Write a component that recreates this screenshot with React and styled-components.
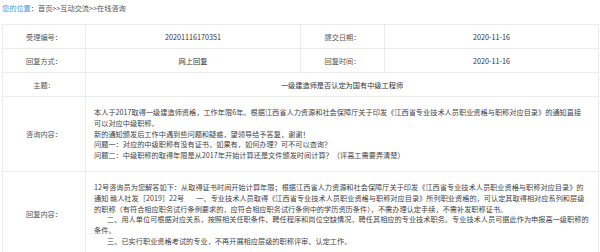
import React from 'react';
import styled, { createGlobalStyle } from 'styled-components';

const GlobalStyle = createGlobalStyle`
  body {
    margin: 0;
    background: #fff;
    font-family: "Noto Sans CJK SC", "Noto Sans", sans-serif;
    color: #333;
  }
`

const Page = styled.div`
  padding: 0 2px;
  width: 596px;
`

const Crumbs = styled.div`
  height: 17px;
  line-height: 17px;
  font-size: 7.2px;
  color: #555;
  margin-bottom: 7px;
`

const CrumbLink = styled.span`
  color: #4a9ad8;
`

const Table = styled.table`
  width: 100%;
  table-layout: fixed;
  border-collapse: collapse;
  font-size: 7.2px;
`

const Cell = styled.td`
  border: 1px solid #ececec;
  height: 23px;
  padding: 0;
  text-align: center;
  vertical-align: middle;
  color: ${p => (p.$label ? '#555' : '#333')};
`

const Content = styled.td`
  border: 1px solid #ececec;
  padding: 10px 6px 10px 8px;
  text-align: left;
  line-height: 10.8px;
  color: #444;
`

const Para = styled.div`
  text-indent: ${p => (p.$indent ? '13px' : '0')};
`

export default function App() {
  return (
    <Page>
      <GlobalStyle />
      <Crumbs>
        <CrumbLink>您的位置</CrumbLink>：首页&gt;&gt;互动交流&gt;&gt;在线咨询
      </Crumbs>
      <Table>
        <colgroup>
          <col style={{ width: 83 }} />
          <col style={{ width: 215 }} />
          <col style={{ width: 84 }} />
          <col style={{ width: 214 }} />
        </colgroup>
        <tbody>
          <tr>
            <Cell $label>受理编号：</Cell>
            <Cell>20201116170351</Cell>
            <Cell $label>提交日期：</Cell>
            <Cell>2020-11-16</Cell>
          </tr>
          <tr>
            <Cell $label>回复方式：</Cell>
            <Cell>网上回复</Cell>
            <Cell $label>回复时间：</Cell>
            <Cell>2020-11-16</Cell>
          </tr>
          <tr>
            <Cell $label>主题：</Cell>
            <Cell colSpan={3}>一级建造师是否认定为国有中级工程师</Cell>
          </tr>
          <tr>
            <Cell $label>咨询内容：</Cell>
            <Content colSpan={3}>
              <Para>本人于2017取得一级建造师资格，工作年限6年。根据江西省人力资源和社会保障厅关于印发《江西省专业技术人员职业资格与职称对应目录》的通知直接<br />可以对应中级职称。</Para>
              <Para>新的通知颁发后工作中遇到些问题和疑惑，望领导给予答复，谢谢！</Para>
              <Para>问题一：对应的中级职称有没有证书，如果有，如何办理？可不可以查询？</Para>
              <Para>问题二：中级职称的取得年限是从2017年开始计算还是文件颁发时间计算？（评高工需要弄清楚）</Para>
            </Content>
          </tr>
          <tr>
            <Cell $label>回复内容：</Cell>
            <Content colSpan={3}>
              <Para>12号咨询员为您解答如下：从取得证书时间开始计算年限；根据江西省人力资源和社会保障厅关于印发《江西省专业技术人员职业资格与职称对应目录》的<br />通知 赣人社发［2019］22号　&nbsp;&nbsp;&nbsp;一、专业技术人员取得《江西省专业技术人员职业资格与职称对应目录》所列职业资格的，可认定其取得相对应系列和层级<br />的职称（有符合相应职务试行条例要求的，应符合相应职务试行条例中的学历资历条件），不需办理认定手续，不需补发职称证书。</Para>
              <Para $indent>二、用人单位可根据对应关系，按照相关任职条件、聘任程序和岗位空缺情况，聘任其相应的专业技术职务。专业技术人员可据此作为申报高一级职称的<br />条件。</Para>
              <Para $indent>三、已实行职业资格考试的专业，不再开展相应层级的职称评审、认定工作。</Para>
            </Content>
          </tr>
        </tbody>
      </Table>
    </Page>
  );
}
